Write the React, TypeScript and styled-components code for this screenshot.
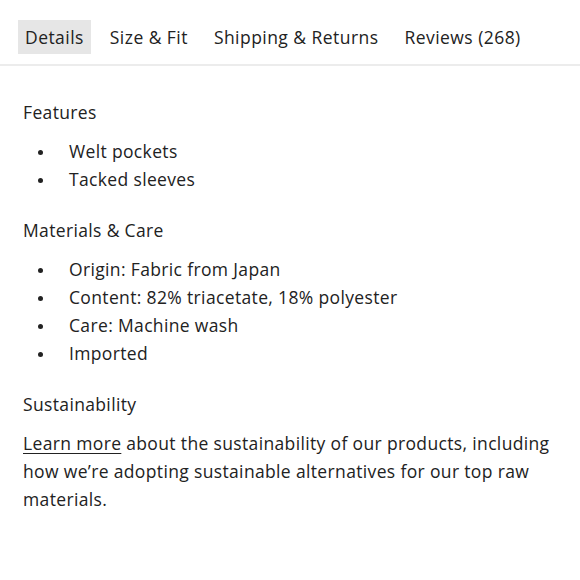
import styled, { createGlobalStyle } from "styled-components";

const GlobalStyle = createGlobalStyle`
  body {
    margin: 0;
    background: #fff;
    font-family: "Open Sans", "Liberation Sans", sans-serif;
    color: #222;
  }
`;

const tabs = ["Details", "Size & Fit", "Shipping & Returns", "Reviews (268)"];

const sections = [
  { title: "Features", items: ["Welt pockets", "Tacked sleeves"] },
  {
    title: "Materials & Care",
    items: [
      "Origin: Fabric from Japan",
      "Content: 82% triacetate, 18% polyester",
      "Care: Machine wash",
      "Imported",
    ],
  },
];

const App = () => {
  return (
    <Page>
      <GlobalStyle />
      <TabBar>
        {tabs.map((t, i) => (
          <Tab key={t} $active={i === 0}>
            {t}
          </Tab>
        ))}
      </TabBar>
      <Body>
        {sections.map((s) => (
          <Section key={s.title}>
            <Heading>{s.title}</Heading>
            <List>
              {s.items.map((it) => (
                <Item key={it}>{it}</Item>
              ))}
            </List>
          </Section>
        ))}
        <Section>
          <Heading>Sustainability</Heading>
          <Paragraph>
            <a href="#">Learn more</a> about the sustainability of our products, including how
            we’re adopting sustainable alternatives for our top raw materials.
          </Paragraph>
        </Section>
      </Body>
    </Page>
  );
};

const Page = styled.div`
  width: 580px;
  height: 580px;
  overflow: hidden;
  font-size: 17.5px;
  letter-spacing: 0.35px;
`;

const TabBar = styled.div`
  display: flex;
  align-items: center;
  gap: 12px;
  padding: 20px 18px 10px;
  border-bottom: 2px solid #ececec;
`;

const Tab = styled.div<{ $active?: boolean }>`
  height: 34px;
  display: flex;
  align-items: center;
  padding: 0 7px;
  letter-spacing: 0.45px;
  color: #222;
  background: ${(p) => (p.$active ? "#e6e6e6" : "transparent")};
`;

const Body = styled.div`
  padding: 32px 23px 0;
  display: flex;
  flex-direction: column;
  gap: 23px;
`;

const Section = styled.div`
  display: flex;
  flex-direction: column;
  gap: 11px;
`;

const Heading = styled.div`
  line-height: 28px;
`;

const List = styled.ul`
  margin: 0;
  padding: 0;
  list-style: none;
`;

const Item = styled.li`
  position: relative;
  line-height: 28px;
  padding-left: 46px;

  &::before {
    content: "";
    position: absolute;
    left: 15px;
    top: 13px;
    width: 5px;
    height: 5px;
    border-radius: 50%;
    background: #222;
  }
`;

const Paragraph = styled.p`
  margin: 0;
  line-height: 28px;

  a {
    color: #222;
    text-decoration: underline;
    text-underline-offset: 3px;
  }
`;

export default App;
